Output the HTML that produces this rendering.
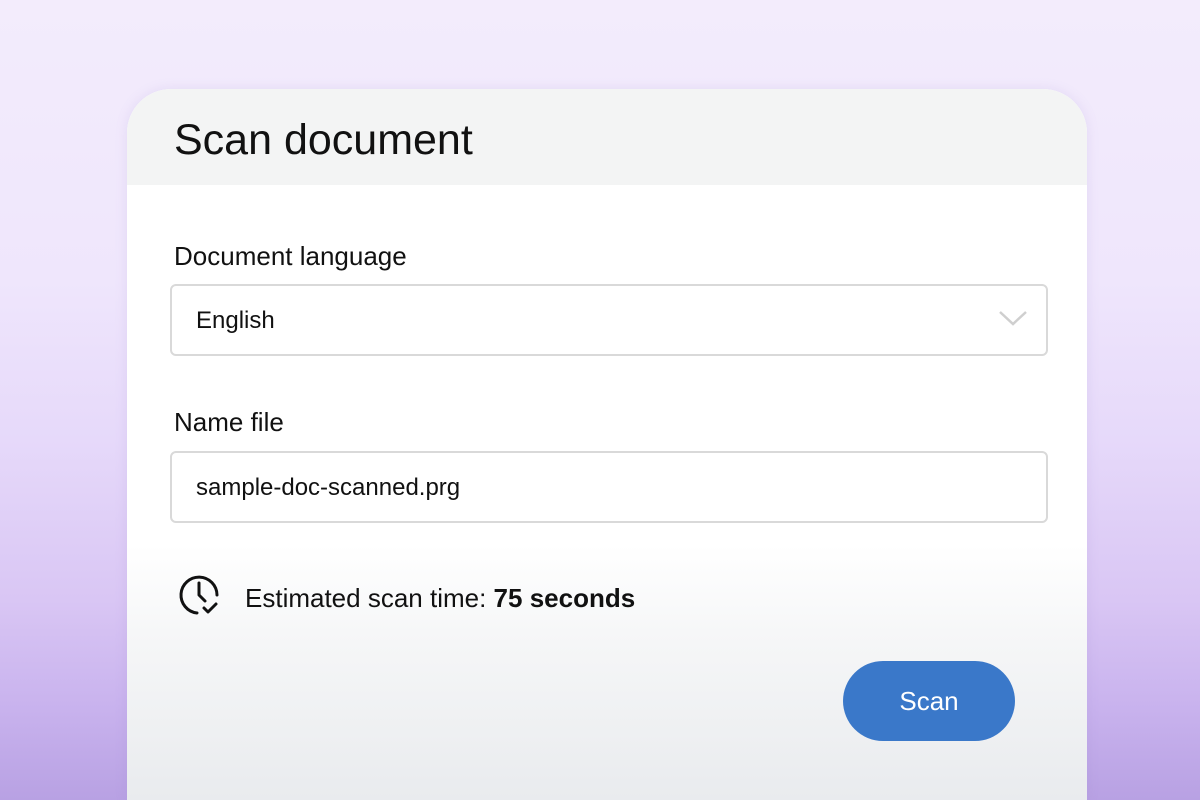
<!DOCTYPE html>
<html><head><style>
html,body{margin:0;width:1200px;height:800px;overflow:hidden}
body{background:linear-gradient(to bottom,#f3ecfc 0%,#efe6fc 35%,#e6d9fa 55%,#d9c6f4 75%,#c9b3ee 88%,#b8a1e3 100%);font-family:"Liberation Sans",sans-serif;position:relative}
.card{position:absolute;left:127px;top:89px;width:960px;height:711px;border-radius:44px 44px 0 0;overflow:hidden;background:linear-gradient(to bottom,#fff 0%,#fff 64%,#f5f6f7 78%,#e9ebee 100%);box-shadow:0 0 12px rgba(150,120,200,0.15)}
.head{height:96px;background:#f3f4f4}
.title{position:absolute;left:47px;top:27px;font-size:43px;color:#111}
.lbl{position:absolute;left:47px;font-size:26px;color:#111}
.box{position:absolute;left:43px;width:874px;height:68px;border:2px solid #d9d9d9;border-radius:6px;background:#fff}
.box span{position:absolute;left:24px;top:21px;font-size:24px;color:#111}
.est{position:absolute;left:118px;top:494px;font-size:26px;color:#111}
.btn{position:absolute;left:716px;top:572px;width:172px;height:80px;border-radius:40px;background:#3a78c9;color:#fff;font-size:26px;text-align:center;line-height:80px}
</style></head><body>
<div class="card">
<div class="head"></div>
<div class="title">Scan document</div>
<div class="lbl" style="top:152px">Document language</div>
<div class="box" style="top:195px"><span>English</span>
<svg style="position:absolute;right:18px;top:22px" width="30" height="20" viewBox="0 0 30 20"><path d="M2 4 L15 16 L28 4" fill="none" stroke="#cfcfcf" stroke-width="2.5"/></svg></div>
<div class="lbl" style="top:318px">Name file</div>
<div class="box" style="top:362px"><span>sample-doc-scanned.prg</span></div>
<svg style="position:absolute;left:50px;top:484px" width="46" height="46" viewBox="0 0 46 46">
<path d="M20 40 A18 18 0 1 1 40 22" fill="none" stroke="#111" stroke-width="3" stroke-linecap="round"/>
<path d="M22 10 V22 L28 28" fill="none" stroke="#111" stroke-width="3" stroke-linecap="round" stroke-linejoin="round"/>
<path d="M27 35 L31 39 L39 31" fill="none" stroke="#111" stroke-width="3" stroke-linecap="round" stroke-linejoin="round"/>
</svg>
<div class="est">Estimated scan time: <b>75 seconds</b></div>
<div class="btn">Scan</div>
</div>
</body></html>
